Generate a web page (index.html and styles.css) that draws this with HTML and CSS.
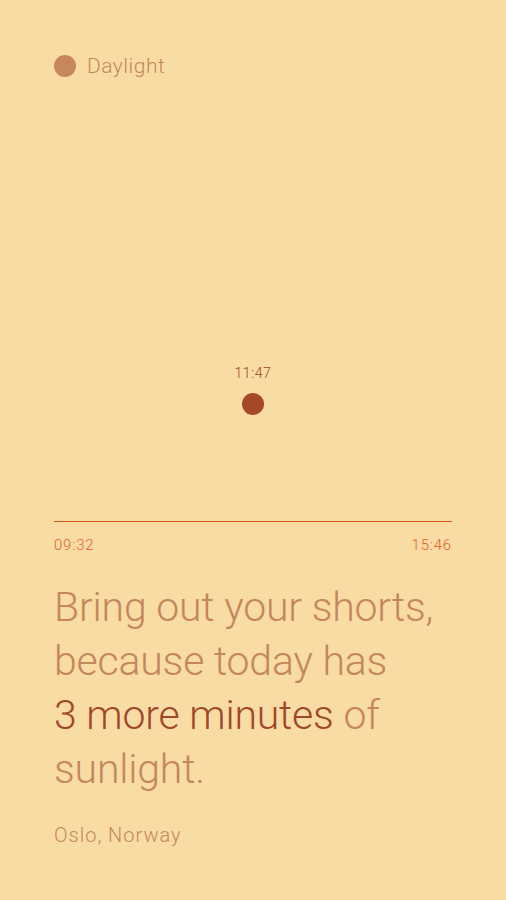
FILE: index.html
```html
<!DOCTYPE html>
<html>
<head>
<meta charset="utf-8">
<link rel="stylesheet" href="styles.css">
</head>
<body>
<main class="screen">
  <header class="brand">
    <span class="brand-dot"></span>
    <span class="brand-name">Daylight</span>
  </header>
  <section class="sun">
    <div class="sun-time">11:47</div>
    <div class="sun-dot"></div>
  </section>
  <section class="track">
    <div class="track-line"></div>
    <div class="track-times">
      <span>09:32</span>
      <span>15:46</span>
    </div>
  </section>
  <h1 class="headline">Bring out your shorts,<br>because today has<br><em class="accent">3 more minutes</em> of<br>sunlight.</h1>
  <p class="place">Oslo, Norway</p>
</main>
</body>
</html>
```
FILE: styles.css
```css
html, body {
  margin: 0;
  padding: 0;
  background: #F9DCA4;
}
.screen {
  box-sizing: border-box;
  width: 506px;
  height: 900px;
  padding: 55px 54px 0 54px;
  display: flex;
  flex-direction: column;
  font-family: Roboto, "Liberation Sans", sans-serif;
  color: #C4865C;
}
.brand {
  display: flex;
  align-items: center;
  gap: 11px;
  height: 22px;
}
.brand-dot {
  width: 22px;
  height: 22px;
  border-radius: 50%;
  background: #C6875E;
}
.brand-name {
  font-size: 21px;
  font-weight: 300;
  letter-spacing: 0.5px;
  color: #C4865C;
}
.sun {
  display: flex;
  flex-direction: column;
  align-items: center;
  margin-top: 288px;
}
.sun-time {
  font-size: 14px;
  font-weight: 300;
  line-height: 16px;
  letter-spacing: 0.6px;
  color: #9C4326;
}
.sun-dot {
  margin-top: 12px;
  width: 22px;
  height: 22px;
  border-radius: 50%;
  background: #A5482A;
}
.track {
  margin-top: 106px;
}
.track-line {
  height: 0;
  border-top: 1px solid #D9531A;
}
.track-times {
  display: flex;
  justify-content: space-between;
  margin-top: 15px;
  font-size: 15px;
  font-weight: 300;
  line-height: 16px;
  letter-spacing: 0.8px;
  color: #E0622A;
}
.headline {
  margin: 27px 0 0 0;
  font-weight: 300;
  font-size: 41px;
  line-height: 54px;
  letter-spacing: -0.2px;
  color: #C4865C;
}
.accent {
  font-style: normal;
  color: #A0472A;
}
.place {
  margin: 28px 0 0 0;
  font-size: 20px;
  font-weight: 300;
  line-height: 22px;
  letter-spacing: 1px;
  color: #C4865C;
}
```
